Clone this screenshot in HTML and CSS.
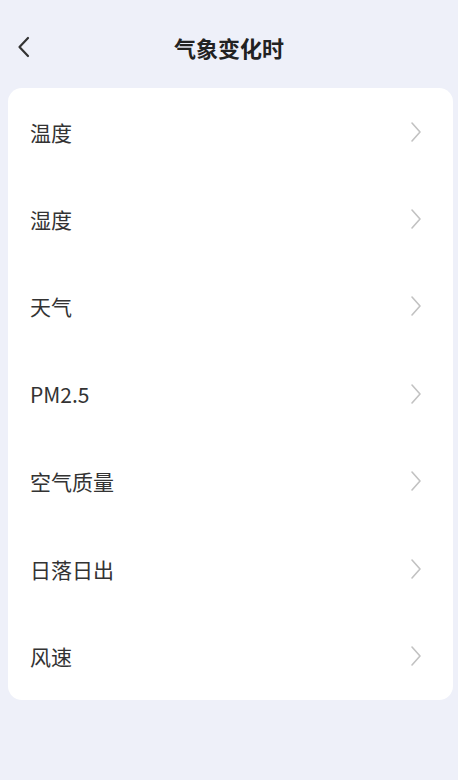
FILE: index.html
```html
<!DOCTYPE html>
<html>
<head>
<meta charset="utf-8">
<link rel="stylesheet" href="styles.css">
</head>
<body>
<div class="header">
  <div class="back"><svg width="14" height="22" viewBox="0 0 14 22"><path d="M11 2 L2.5 11 L11 20" fill="none" stroke="#333" stroke-width="2.2" stroke-linecap="round" stroke-linejoin="round"/></svg></div>
  <div class="title">气象变化时</div>
</div>
<div class="card">
  <div class="row"><span>温度</span><svg class="chev" width="12" height="22" viewBox="0 0 12 22"><path d="M2 2 L10 11 L2 20" fill="none" stroke="#c2c2c2" stroke-width="1.6" stroke-linecap="round" stroke-linejoin="round"/></svg></div>
  <div class="row"><span>湿度</span><svg class="chev" width="12" height="22" viewBox="0 0 12 22"><path d="M2 2 L10 11 L2 20" fill="none" stroke="#c2c2c2" stroke-width="1.6" stroke-linecap="round" stroke-linejoin="round"/></svg></div>
  <div class="row"><span>天气</span><svg class="chev" width="12" height="22" viewBox="0 0 12 22"><path d="M2 2 L10 11 L2 20" fill="none" stroke="#c2c2c2" stroke-width="1.6" stroke-linecap="round" stroke-linejoin="round"/></svg></div>
  <div class="row"><span>PM2.5</span><svg class="chev" width="12" height="22" viewBox="0 0 12 22"><path d="M2 2 L10 11 L2 20" fill="none" stroke="#c2c2c2" stroke-width="1.6" stroke-linecap="round" stroke-linejoin="round"/></svg></div>
  <div class="row"><span>空气质量</span><svg class="chev" width="12" height="22" viewBox="0 0 12 22"><path d="M2 2 L10 11 L2 20" fill="none" stroke="#c2c2c2" stroke-width="1.6" stroke-linecap="round" stroke-linejoin="round"/></svg></div>
  <div class="row"><span>日落日出</span><svg class="chev" width="12" height="22" viewBox="0 0 12 22"><path d="M2 2 L10 11 L2 20" fill="none" stroke="#c2c2c2" stroke-width="1.6" stroke-linecap="round" stroke-linejoin="round"/></svg></div>
  <div class="row"><span>风速</span><svg class="chev" width="12" height="22" viewBox="0 0 12 22"><path d="M2 2 L10 11 L2 20" fill="none" stroke="#c2c2c2" stroke-width="1.6" stroke-linecap="round" stroke-linejoin="round"/></svg></div>
</div>
</body>
</html>
```
FILE: styles.css
```css
html, body {
  margin: 0;
  padding: 0;
  background: #eef0f9;
  font-family: "Noto Sans CJK SC", "Noto Sans", sans-serif;
  color: #333;
}
body {
  width: 458px;
  height: 780px;
}
.header {
  height: 88px;
  display: flex;
  align-items: center;
  justify-content: center;
  position: relative;
  box-sizing: border-box;
}
.header .title {
  font-size: 22px;
  font-weight: 700;
  color: #222;
  margin-top: 5px;
}
.back {
  position: absolute;
  left: 17px;
  top: 36px;
  width: 14px;
  height: 22px;
  display: flex;
}
.card {
  margin: 0 5px 0 8px;
  background: #fff;
  border-radius: 14px;
  display: flex;
  flex-direction: column;
}
.row {
  height: 87.4px;
  display: flex;
  align-items: center;
  justify-content: space-between;
  padding: 0 31px 0 22px;
  font-size: 21px;
  color: #333;
}
.chev {
  display: block;
}
```
